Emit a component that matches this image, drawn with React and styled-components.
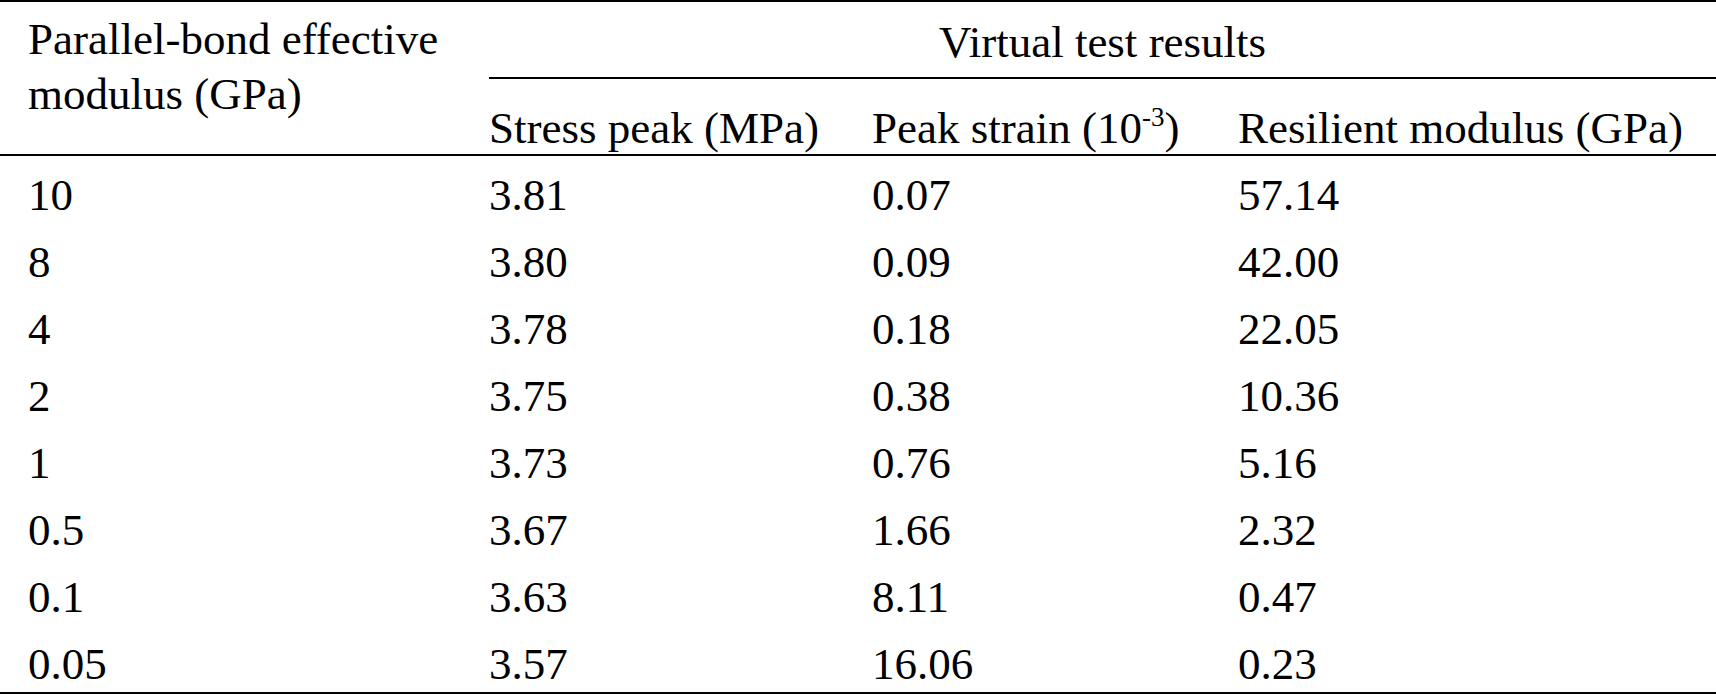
import React from "react";
import styled, { createGlobalStyle, css } from "styled-components";

const Global = createGlobalStyle`
  html, body {
    margin: 0;
    padding: 0;
    background: #ffffff;
  }
  body {
    font-family: "Liberation Serif", "Times New Roman", serif;
    color: #000000;
  }
`;

const columns = css`
  display: grid;
  grid-template-columns: 489px 383px 366px 1fr;
`;

const Table = styled.div`
  width: 1716px;
  border-top: 2px solid #000;
  border-bottom: 2px solid #000;
  font-size: 45px;
`;

const Head = styled.div`
  ${columns};
  grid-template-rows: 77px 75px;
  border-bottom: 2px solid #000;
`;

const StubHead = styled.div`
  grid-row: 1 / span 2;
  grid-column: 1;
  padding: 10px 0 0 28px;
  line-height: 55px;
`;

const GroupHead = styled.div`
  grid-row: 1;
  grid-column: 2 / span 3;
  text-align: center;
  line-height: 56px;
  padding-top: 12px;
  box-sizing: border-box;
  border-bottom: 2px solid #000;
  white-space: nowrap;
`;

const SubHead = styled.div`
  grid-row: 2;
  padding-top: 22px;
  line-height: 55px;
  white-space: nowrap;
`;

const Sup = styled.sup`
  font-size: 27px;
  line-height: 0;
  vertical-align: 17px;
`;

const Row = styled.div`
  ${columns};
  height: 67px;
`;

const Cell = styled.div`
  padding-top: 11px;
  padding-left: ${(p) => (p.$stub ? "28px" : "0")};
  line-height: 56px;
  white-space: nowrap;
`;

const rows = [
  ["10", "3.81", "0.07", "57.14"],
  ["8", "3.80", "0.09", "42.00"],
  ["4", "3.78", "0.18", "22.05"],
  ["2", "3.75", "0.38", "10.36"],
  ["1", "3.73", "0.76", "5.16"],
  ["0.5", "3.67", "1.66", "2.32"],
  ["0.1", "3.63", "8.11", "0.47"],
  ["0.05", "3.57", "16.06", "0.23"],
];

export default function App() {
  return (
    <>
      <Global />
      <Table>
        <Head>
          <StubHead>
            Parallel-bond effective
            <br />
            modulus (GPa)
          </StubHead>
          <GroupHead>Virtual test results</GroupHead>
          <SubHead>Stress peak (MPa)</SubHead>
          <SubHead>
            Peak strain (10<Sup>-3</Sup>)
          </SubHead>
          <SubHead>Resilient modulus (GPa)</SubHead>
        </Head>
        {rows.map((r) => (
          <Row key={r[0]}>
            {r.map((v, i) => (
              <Cell key={i} $stub={i === 0}>
                {v}
              </Cell>
            ))}
          </Row>
        ))}
      </Table>
    </>
  );
}
